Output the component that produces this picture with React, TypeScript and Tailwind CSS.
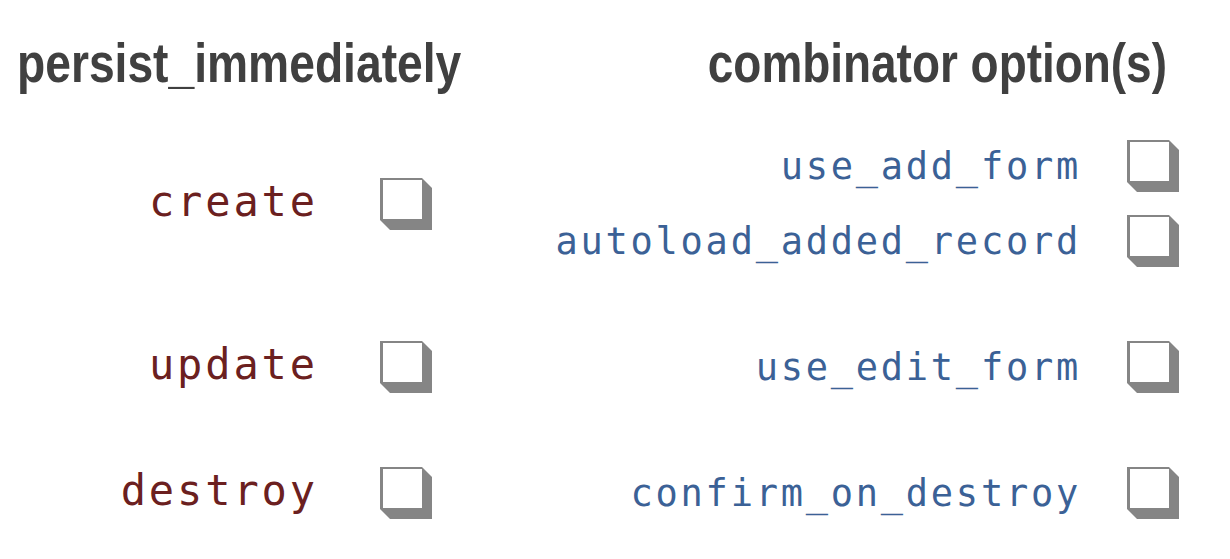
import React from 'react';

const Box: React.FC = () => (
  <svg width="52" height="52" viewBox="0 0 52 52" className="shrink-0">
    <polygon points="0,0 42,0 52,10 52,52 10,52 0,42" fill="#858585" />
    <rect x="3" y="2" width="39" height="39" fill="#ffffff" />
  </svg>
);

const Left: React.FC<{ label: string }> = ({ label }) => (
  <div className="flex items-center justify-end gap-[62px]">
    <span className="mb-[4px] text-[42px] leading-none tracking-[2.9px] text-[#6b2020] [font-family:'DejaVu_Sans_Mono',monospace]">
      {label}
    </span>
    <Box />
  </div>
);

const Right: React.FC<{ label: string }> = ({ label }) => (
  <div className="flex items-center justify-end gap-[46px]">
    <span className="text-[37px] leading-none tracking-[2.75px] text-[#3b6196] [font-family:'DejaVu_Sans_Mono',monospace]">
      {label}
    </span>
    <Box />
  </div>
);

export default function App() {
  return (
    <div className="w-[1230px] h-[559px] bg-white overflow-hidden">
      <div className="flex justify-between pl-[17px] pr-[63px] pt-[33px] text-[56px] leading-[60px] font-bold text-[#404040] whitespace-nowrap [font-family:'Liberation_Sans',Arial,sans-serif]">
        <div className="inline-block origin-left scale-x-[0.825]">persist_immediately</div>
        <div className="inline-block origin-right scale-x-[0.82]">combinator option(s)</div>
      </div>

      <div className="mt-[47px] grid grid-cols-[432px_747px] grid-rows-[127px_52px_52px] gap-y-[74px]">
        <div className="flex flex-col justify-center">
          <Left label="create" />
        </div>
        <div className="flex flex-col justify-center gap-[23px]">
          <Right label="use_add_form" />
          <Right label="autoload_added_record" />
        </div>

        <Left label="update" />
        <Right label="use_edit_form" />

        <Left label="destroy" />
        <Right label="confirm_on_destroy" />
      </div>
    </div>
  );
}
